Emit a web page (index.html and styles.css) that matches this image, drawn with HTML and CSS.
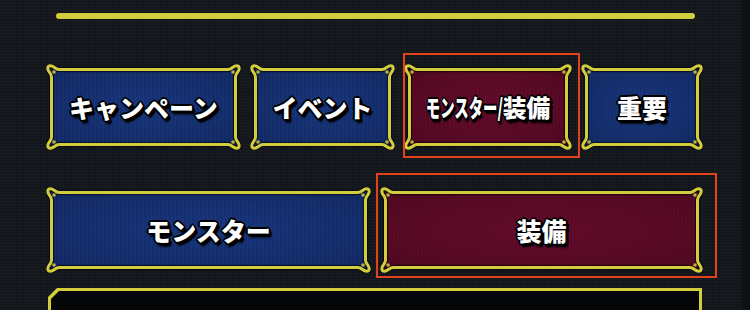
FILE: index.html
```html
<!DOCTYPE html>
<html lang="ja">
<head>
<meta charset="utf-8">
<title>タブ</title>
<link rel="stylesheet" href="styles.css">
</head>
<body>
<div class="screen">
  <div class="topbar"></div>
  <nav class="tabs tabs-main">
    <div class="btn blue w-campaign"><span class="label">キャンペーン</span></div>
    <div class="btn blue w-event"><span class="label">イベント</span></div>
    <div class="btn maroon w-mix sel sel-a"><span class="label small"><span class="cond">モンスター/</span>装備</span></div>
    <div class="btn blue w-important"><span class="label">重要</span></div>
  </nav>
  <nav class="tabs tabs-sub">
    <div class="btn blue w-monster"><span class="label">モンスター</span></div>
    <div class="btn maroon w-equip sel sel-b"><span class="label">装備</span></div>
  </nav>
  <div class="panel"><div class="panel-inner"></div></div>
</div>
</body>
</html>
```
FILE: styles.css
```css
html, body {
  margin: 0;
  padding: 0;
}
body {
  width: 750px;
  height: 310px;
  overflow: hidden;
  background:
    linear-gradient(90deg, transparent 0 738px, rgba(0,0,0,.35) 745px),
    repeating-linear-gradient(0deg, rgba(255,255,255,.018) 0 1px, transparent 1px 3px),
    repeating-linear-gradient(90deg, rgba(255,255,255,.018) 0 1px, transparent 1px 3px),
    #12161b;
  font-family: "Noto Sans CJK JP", "Noto Sans", sans-serif;
}
.screen {
  padding: 13px 0 0 46px;
}
.topbar {
  margin-left: 10px;
  width: 639px;
  height: 6px;
  border-radius: 3px;
  background: #d3cd3e;
  box-shadow: 0 0 0 1px rgba(0,0,0,.55), 0 0 3px rgba(210,205,60,.25);
}
.tabs {
  display: flex;
  gap: 9px;
}
.tabs-main { margin-top: 45px; }
.tabs-sub { margin-top: 37px; }

.btn {
  position: relative;
  box-sizing: border-box;
  height: 86px;
  flex: 0 0 auto;
  display: flex;
  align-items: center;
  justify-content: center;
  border: 14px solid transparent;
  border-image: url("data:image/svg+xml;utf8,<svg xmlns='http://www.w3.org/2000/svg' width='40' height='40' viewBox='0 0 40 40'><path d='M13 5.5H27C31 5.5 32 1.8 35.5 1.8C37.4 1.8 38.2 2.6 38.2 4.5C38.2 8 34.5 9 34.5 13V27C34.5 31 38.2 32 38.2 35.5C38.2 37.4 37.4 38.2 35.5 38.2C32 38.2 31 34.5 27 34.5H13C9 34.5 8 38.2 4.5 38.2C2.6 38.2 1.8 37.4 1.8 35.5C1.8 32 5.5 31 5.5 27V13C5.5 9 1.8 8 1.8 4.5C1.8 2.6 2.6 1.8 4.5 1.8C8 1.8 9 5.5 13 5.5Z' fill='none' stroke='%23000' stroke-opacity='.55' stroke-width='5.5' stroke-linejoin='round'/><path d='M13 5.5H27C31 5.5 32 1.8 35.5 1.8C37.4 1.8 38.2 2.6 38.2 4.5C38.2 8 34.5 9 34.5 13V27C34.5 31 38.2 32 38.2 35.5C38.2 37.4 37.4 38.2 35.5 38.2C32 38.2 31 34.5 27 34.5H13C9 34.5 8 38.2 4.5 38.2C2.6 38.2 1.8 37.4 1.8 35.5C1.8 32 5.5 31 5.5 27V13C5.5 9 1.8 8 1.8 4.5C1.8 2.6 2.6 1.8 4.5 1.8C8 1.8 9 5.5 13 5.5Z' fill='none' stroke='%23d3cd3e' stroke-width='3' stroke-linejoin='round'/><g fill='%23b9b33c'><circle cx='8' cy='8' r='1.8'/><circle cx='32' cy='8' r='1.8'/><circle cx='32' cy='32' r='1.8'/><circle cx='8' cy='32' r='1.8'/></g></svg>") 14 / 14px / 0 stretch;
}
.blue {
  background:
    repeating-linear-gradient(90deg, rgba(255,255,255,.025) 0 1px, transparent 1px 4px) 5px 5px / calc(100% - 10px) calc(100% - 10px) no-repeat border-box,
    radial-gradient(ellipse at center, #17347a 0%, #132c69 70%, #102660 100%) 5px 5px / calc(100% - 10px) calc(100% - 10px) no-repeat border-box;
}
.maroon {
  background:
    repeating-linear-gradient(90deg, rgba(255,255,255,.025) 0 1px, transparent 1px 4px) 5px 5px / calc(100% - 10px) calc(100% - 10px) no-repeat border-box,
    radial-gradient(ellipse at center, #600a29 0%, #560823 70%, #4c061f 100%) 5px 5px / calc(100% - 10px) calc(100% - 10px) no-repeat border-box;
}
.w-campaign { width: 195px; }
.w-event { width: 145px; }
.w-mix { width: 168px; }
.w-important { width: 122px; }
.w-monster { width: 325px; }
.w-equip { width: 323px; }

.label {
  color: #fff;
  font-size: 25px;
  font-weight: 900;
  line-height: 1;
  white-space: nowrap;
  text-shadow:
    -1px -1px 0 #000, 1px -1px 0 #000, -1px 1px 0 #000, 1px 1px 0 #000,
    0 -2px 0 #000, -2px 0 0 #000, 2px 0 0 #000, 0 2px 0 #000,
    2px 2px 0 #000, 3px 3px 0 #000, 2px 4px 2px rgba(0,0,0,.85);
}
.small {
  font-size: 24px;
}
.cond {
  display: inline-block;
  transform: scaleX(.6);
  margin: 0 -26px 0 -26px;
}

.sel::after {
  content: "";
  position: absolute;
  border: 2px solid #e3421f;
  pointer-events: none;
}
.sel-a::after {
  top: -25px;
  left: -15px;
  right: -22px;
  bottom: -22px;
}
.sel-b::after {
  top: -28px;
  left: -18px;
  right: -28px;
  bottom: -19px;
}

.panel {
  margin: 15px 0 0 2px;
  width: 654px;
  height: 22px;
  padding: 3px 3px 0;
  box-sizing: border-box;
  background: #d3cd3e;
  clip-path: polygon(9px 0, 100% 0, 100% 100%, 0 100%, 0 9px);
}
.panel-inner {
  height: 100%;
  background: #050607;
  clip-path: polygon(8px 0, 100% 0, 100% 100%, 0 100%, 0 8px);
}
```
